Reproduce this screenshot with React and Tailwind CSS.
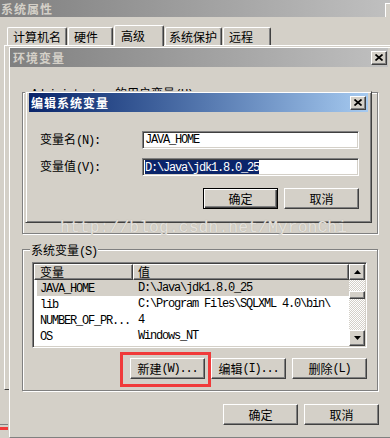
import React from "react";

function M({ children }) {
  return <span className="font-['Liberation_Mono',monospace] tracking-[-1.2px]">{children}</span>;
}

function Btn({ children, def }) {
  if (def) {
    return (
      <div className="flex items-center justify-center w-[75px] h-[21px] border border-black bg-[#d4d0c8] shadow-[inset_1px_1px_#fff,inset_-1px_-1px_#404040,inset_-2px_-2px_#808080]">
        {children}
      </div>
    );
  }
  return (
    <div className="flex items-center justify-center w-[75px] h-[21px] border border-t-white border-l-white border-r-[#404040] border-b-[#404040] bg-[#d4d0c8] shadow-[inset_-1px_-1px_#808080]">
      {children}
    </div>
  );
}

function CloseBtn() {
  return (
    <div className="ml-auto flex items-center justify-center w-[16px] h-[14px] border border-t-white border-l-white border-r-[#404040] border-b-[#404040] bg-[#d4d0c8] shadow-[inset_-1px_-1px_#808080]">
      <svg width="8" height="7" viewBox="0 0 8 7">
        <path d="M0.5 0.5 L7.5 6.5 M7.5 0.5 L0.5 6.5" stroke="#000" strokeWidth="1.7" />
      </svg>
    </div>
  );
}

function Tab({ children, w, pl, sel }) {
  return (
    <div
      className={`flex items-center rounded-t-[2px] border-t border-l border-white border-r border-r-[#404040] shadow-[inset_-1px_0_#808080] bg-[#d4d0c8] ${w} ${pl} ${
        sel ? "h-[21px] -mb-[1px] relative" : "h-[18px]"
      }`}
    >
      {children}
    </div>
  );
}

function Arrow({ up }) {
  return (
    <svg width="7" height="4" viewBox="0 0 7 4">
      <polygon points={up ? "3.5,0 7,4 0,4" : "0,0 7,0 3.5,4"} fill="#000" />
    </svg>
  );
}

const rows = [
  ["JAVA_HOME", "D:\\Java\\jdk1.8.0_25"],
  ["lib", "C:\\Program Files\\SQLXML 4.0\\bin\\"],
  ["NUMBER_OF_PR...", "4"],
  ["OS", "Windows_NT"],
];

export default function App() {
  return (
    <div className="relative w-[390px] h-[438px] overflow-hidden bg-[#d4d0c8] text-[12px] leading-[14px] text-black font-['Noto_Sans_CJK_SC',sans-serif]">
      {/* 系统属性 window behind */}
      <div className="flex flex-col">
        <div className="flex items-center h-[17px] bg-gradient-to-r from-[#808080] to-[#c0c0c0]">
          <span className="pl-[1px] font-bold tracking-[1px] text-[#d4d0c8]">系统属性</span>
          <div className="ml-auto mt-[2px] w-[5px] h-[14px] border-l border-t border-white bg-[#d4d0c8]" />
        </div>
        <div className="flex items-end gap-[1px] h-[28px] pl-[7px]">
          <Tab w="w-[60px]" pl="pl-[5px]">计算机名</Tab>
          <Tab w="w-[45px]" pl="pl-[5px]">硬件</Tab>
          <Tab w="w-[50px]" pl="pl-[6px]" sel>高级</Tab>
          <Tab w="w-[57px]" pl="pl-[3px]">系统保护</Tab>
          <Tab w="w-[48px]" pl="pl-[5px]">远程</Tab>
        </div>
        <div className="ml-[4px] h-[345px] border-t border-l border-white border-b border-b-[#404040]" />
        <div className="mt-[34px] w-[8px] h-[1px] bg-[#808080]" />
        <div className="mt-[2px] w-[8px] h-[3px] bg-[#f03a3a]" />
      </div>

      {/* 环境变量 window */}
      <div className="absolute left-[9px] top-[47px] w-[390px] h-[391px] flex flex-col bg-[#d4d0c8] border-l border-t border-white border-b border-b-[#808080]">
        <div className="flex items-center h-[19px] w-[378px] pl-[3px] pr-[1px] bg-gradient-to-r from-[#808080] to-[#c0c0c0]">
          <span className="font-bold tracking-[1px] text-[#d4d0c8]">环境变量</span>
          <CloseBtn />
        </div>

        <div className="flex flex-col pl-[12px]">
          {/* user variables, mostly covered by the dialog */}
          <div className="relative mt-[25px] w-[356px] h-[142px] border border-[#808080] shadow-[1px_1px_0_#fff,inset_1px_1px_0_#fff]">
            <span className="absolute -top-[7px] left-[7px] px-[1px] bg-[#d4d0c8]">
              <M>Administrator </M>的用户变量<M>(U)</M>
            </span>
          </div>

          {/* system variables */}
          <div className="relative mt-[15px] w-[356px] h-[142px] flex flex-col pt-[12px] pl-[9px] pr-[10px] border border-[#808080] shadow-[1px_1px_0_#fff,inset_1px_1px_0_#fff]">
            <span className="absolute -top-[7px] left-[7px] px-[1px] bg-[#d4d0c8]">
              系统变量<M>(S)</M>
            </span>

            <div className="flex w-[335px] h-[86px] p-[1px] bg-white border border-t-[#808080] border-l-[#808080] border-r-white border-b-white shadow-[inset_1px_1px_#404040,inset_-1px_-1px_#d4d0c8]">
              <div className="flex flex-col flex-1">
                <div className="flex h-[16px]">
                  <div className="flex items-center w-[99px] pl-[5px] border border-t-white border-l-white border-r-[#404040] border-b-[#404040] bg-[#d4d0c8] shadow-[inset_-1px_-1px_#808080]">
                    变量
                  </div>
                  <div className="flex items-center flex-1 pl-[4px] border border-t-white border-l-white border-r-[#404040] border-b-[#404040] bg-[#d4d0c8] shadow-[inset_-1px_-1px_#808080]">
                    值
                  </div>
                </div>
                {rows.map(([k, v], i) => (
                  <div key={k} className={`flex items-center h-[16px] ml-[3px] pl-[3px] whitespace-nowrap ${i === 0 ? "bg-[#d4d0c8]" : ""}`}>
                    <div className="w-[98px]">
                      <M>{k}</M>
                    </div>
                    <M>{v}</M>
                  </div>
                ))}
              </div>
              <div className="flex flex-col w-[16px] bg-[repeating-conic-gradient(#fff_0_25%,#d4d0c8_0_50%)] bg-[length:2px_2px]">
                <div className="flex items-center justify-center h-[16px] border border-t-white border-l-white border-r-[#404040] border-b-[#404040] bg-[#d4d0c8] shadow-[inset_-1px_-1px_#808080]">
                  <Arrow up />
                </div>
                <div className="mt-[11px] h-[8px] border border-t-white border-l-white border-r-[#404040] border-b-[#404040] bg-[#d4d0c8] shadow-[inset_-1px_-1px_#808080]" />
                <div className="mt-auto flex items-center justify-center h-[16px] border border-t-white border-l-white border-r-[#404040] border-b-[#404040] bg-[#d4d0c8] shadow-[inset_-1px_-1px_#808080]">
                  <Arrow />
                </div>
              </div>
            </div>

            <div className="flex justify-end gap-[6px] mt-[10px]">
              <div className="relative">
                <Btn>
                  新建<M>(W)...</M>
                </Btn>
                <div className="absolute -left-[10px] -top-[6px] w-[91px] h-[35px] border-[3px] border-[#f03a3a]" />
              </div>
              <Btn>
                编辑<M>(I)...</M>
              </Btn>
              <Btn>
                删除<M>(L)</M>
              </Btn>
            </div>
          </div>

          <div className="flex justify-end gap-[6px] w-[357px] mt-[13px]">
            <Btn>确定</Btn>
            <Btn>取消</Btn>
          </div>
        </div>
      </div>

      {/* 编辑系统变量 dialog */}
      <div className="absolute left-[25px] top-[91px] w-[347px] h-[132px] flex flex-col p-[3px] pt-[1px] bg-[#d4d0c8] border border-t-[#d4d0c8] border-l-[#d4d0c8] border-r-[#404040] border-b-[#404040] shadow-[inset_1px_1px_#fff,inset_-1px_-1px_#808080]">
        <div className="flex items-center h-[19px] pl-[2px] pr-[2px] bg-gradient-to-r from-[#0a246a] to-[#a6caf0]">
          <span className="font-bold tracking-[1px] text-white">编辑系统变量</span>
          <CloseBtn />
        </div>
        <div className="flex flex-col pl-[11px]">
          <div className="flex items-center mt-[19px]">
            <div className="w-[102px]">
              变量名<M>(N):</M>
            </div>
            <div className="flex items-center w-[217px] h-[18px] pl-[2px] bg-white border border-t-[#808080] border-l-[#808080] border-r-white border-b-white shadow-[inset_1px_1px_#404040,inset_-1px_-1px_#d4d0c8]">
              <M>JAVA_HOME</M>
            </div>
          </div>
          <div className="flex items-center mt-[9px]">
            <div className="w-[102px]">
              变量值<M>(V):</M>
            </div>
            <div className="flex items-center w-[217px] h-[18px] pl-[2px] bg-white border border-t-[#808080] border-l-[#808080] border-r-white border-b-white shadow-[inset_1px_1px_#404040,inset_-1px_-1px_#d4d0c8]">
              <span className="bg-[#0a246a] text-white leading-[12px]">
                <M>D:\Java\jdk1.8.0_25</M>
              </span>
            </div>
          </div>
          <div className="flex justify-end gap-[6px] w-[319px] mt-[12px]">
            <Btn def>确定</Btn>
            <Btn>取消</Btn>
          </div>
        </div>
      </div>

      {/* watermark */}
      <div className="absolute left-[60px] top-[218px] pointer-events-none font-['Liberation_Mono',monospace] text-[16.5px] leading-[20px] text-[#e4e1dc] [text-shadow:0_0_1px_#b0aca4]">
        http://blog.csdn.net/MyronChi
      </div>
    </div>
  );
}
